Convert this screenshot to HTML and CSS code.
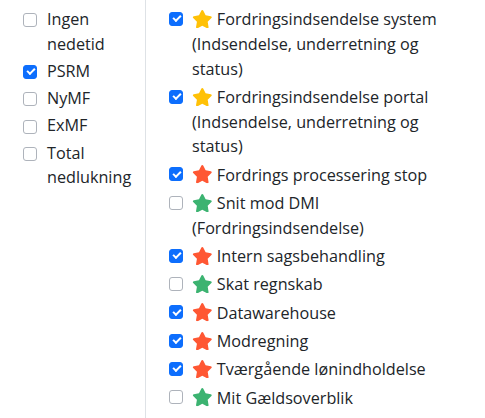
FILE: index.html
```html
<!DOCTYPE html>
<html lang="da">
<head>
<meta charset="utf-8">
<link rel="stylesheet" href="styles.css">
</head>
<body>
<svg width="0" height="0" class="defs">
  <defs>
    <symbol id="star" viewBox="0 0 576 512">
      <path d="M316.9 18C311.6 7 300.4 0 288.1 0s-23.4 7-28.8 18L195 150.3 51.4 171.5c-12 1.8-22 10.2-25.7 21.7s-.7 24.2 7.9 32.7L137.8 329 113.2 474.7c-2 12 3 24.2 12.9 31.3s23 8 33.8 2.3l128.3-68.5 128.3 68.5c10.8 5.7 23.9 4.9 33.8-2.3s14.9-19.3 12.9-31.3L438.5 329 542.7 225.9c8.6-8.5 11.7-21.2 7.9-32.7s-13.7-19.9-25.7-21.7L381.2 150.3 316.9 18z"/>
    </symbol>
  </defs>
</svg>
<div class="layout">
  <div class="filters">
    <label class="item"><span class="box"></span><span class="text">Ingen nedetid</span></label>
    <label class="item"><span class="box checked"></span><span class="text">PSRM</span></label>
    <label class="item"><span class="box"></span><span class="text">NyMF</span></label>
    <label class="item"><span class="box"></span><span class="text">ExMF</span></label>
    <label class="item"><span class="box"></span><span class="text">Total nedlukning</span></label>
  </div>
  <div class="systems">
    <label class="item"><span class="box checked"></span><span class="text"><svg class="star yellow"><use href="#star"/></svg> Fordringsindsendelse system (Indsendelse, underretning og status)</span></label>
    <label class="item"><span class="box checked"></span><span class="text"><svg class="star yellow"><use href="#star"/></svg> Fordringsindsendelse portal (Indsendelse, underretning og status)</span></label>
    <label class="item"><span class="box checked"></span><span class="text"><svg class="star red"><use href="#star"/></svg> Fordrings processering stop</span></label>
    <label class="item"><span class="box"></span><span class="text"><svg class="star green"><use href="#star"/></svg> Snit mod DMI (Fordringsindsendelse)</span></label>
    <label class="item"><span class="box checked"></span><span class="text"><svg class="star red"><use href="#star"/></svg> Intern sagsbehandling</span></label>
    <label class="item"><span class="box"></span><span class="text"><svg class="star green"><use href="#star"/></svg> Skat regnskab</span></label>
    <label class="item"><span class="box checked"></span><span class="text"><svg class="star red"><use href="#star"/></svg> Datawarehouse</span></label>
    <label class="item"><span class="box checked"></span><span class="text"><svg class="star red"><use href="#star"/></svg> Modregning</span></label>
    <label class="item"><span class="box checked"></span><span class="text"><svg class="star red"><use href="#star"/></svg> Tværgående lønindholdelse</span></label>
    <label class="item"><span class="box"></span><span class="text"><svg class="star green"><use href="#star"/></svg> Mit Gældsoverblik</span></label>
  </div>
</div>
</body>
</html>
```

FILE: styles.css
```css
html, body {
  margin: 0;
  padding: 0;
  background: #ffffff;
}

body {
  font-family: "Open Sans", "Noto Sans", sans-serif;
  font-size: 16.2px;
  color: #212529;
}

.defs {
  position: absolute;
  width: 0;
  height: 0;
}

.layout {
  display: grid;
  grid-template-columns: 146px 1fr;
  height: 418px;
}

.filters {
  border-right: 1px solid #dee2e6;
  padding: 7px 4px 0 23px;
  line-height: 24.6px;
}

.filters .item {
  margin-bottom: 2.7px;
}

.systems {
  padding: 7px 35px 0 23px;
  line-height: 24.8px;
}

.systems .item {
  margin-bottom: 3.5px;
}

.item {
  display: flex;
  align-items: flex-start;
}

.box {
  flex: none;
  box-sizing: border-box;
  width: 14px;
  height: 14px;
  margin-top: 6.3px;
  margin-right: 10px;
  border: 1.5px solid #aeb3bb;
  border-radius: 3px;
  background: #fff;
  position: relative;
}

.systems .box {
  margin-top: 4.7px;
  margin-right: 9px;
}

.box.checked {
  background: #0d6efd;
  border-color: #0d6efd;
}

.box.checked::after {
  content: "";
  position: absolute;
  left: 2.5px;
  top: 2.2px;
  width: 6px;
  height: 3px;
  border-left: 2px solid #fff;
  border-bottom: 2px solid #fff;
  transform: rotate(-45deg);
}

.text {
  flex: 1;
}

.star {
  width: 20.6px;
  height: 18.3px;
  vertical-align: -3px;
}

.star.yellow { fill: #ffc107; }
.star.red { fill: #ff5733; }
.star.green { fill: #3cb371; }
```
